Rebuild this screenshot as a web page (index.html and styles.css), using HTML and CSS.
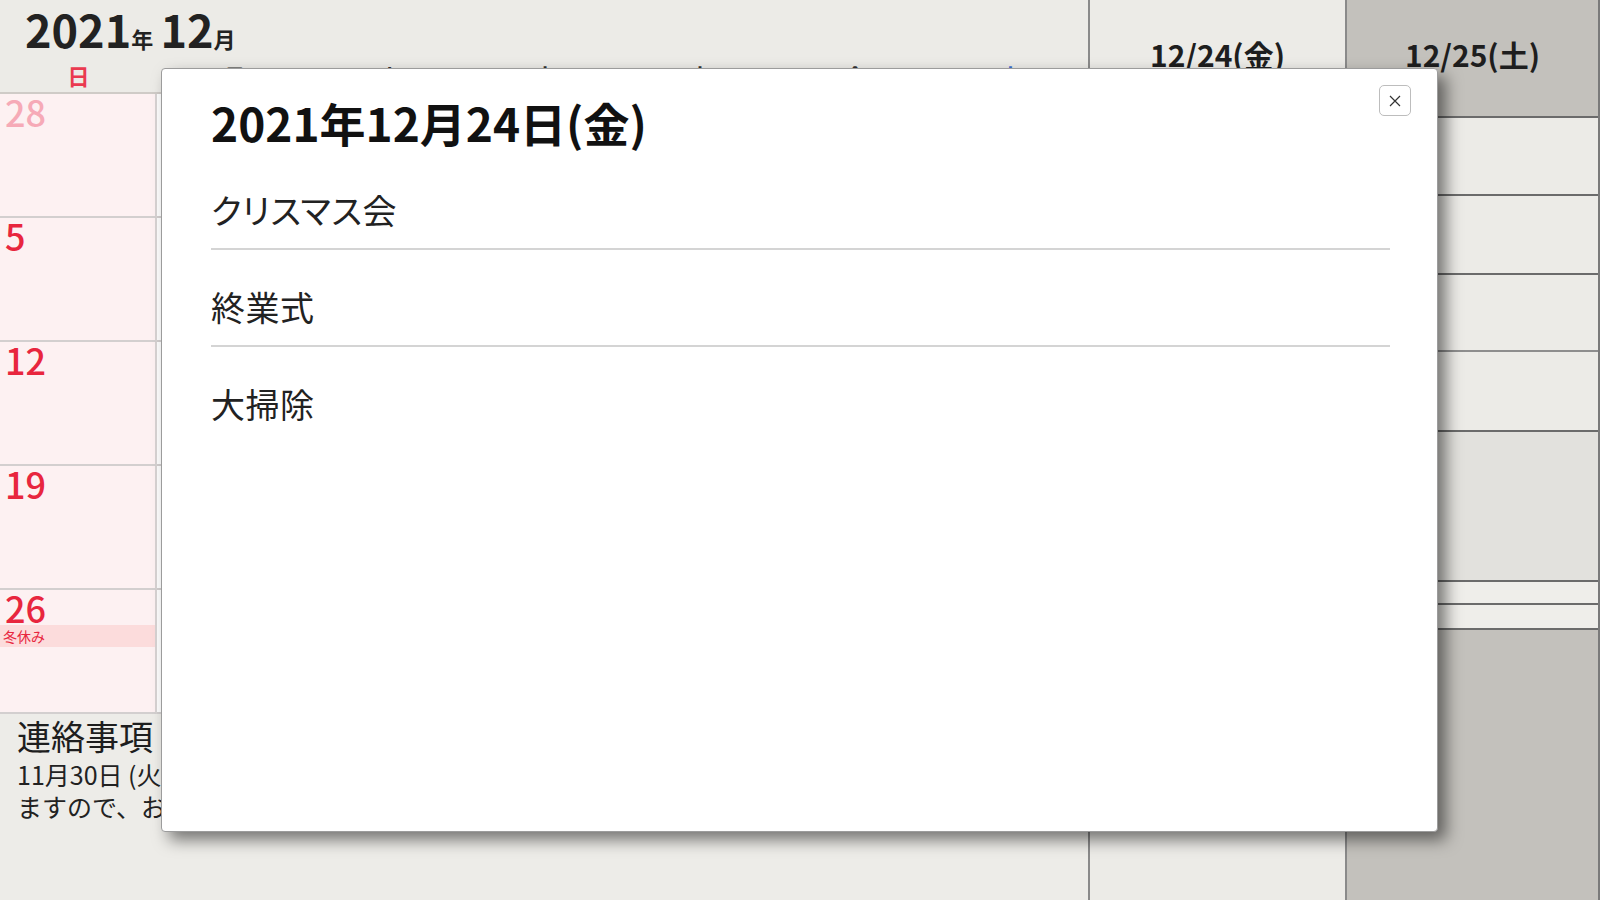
FILE: index.html
```html
<!DOCTYPE html>
<html lang="ja">
<head>
<meta charset="utf-8">
<title>2021年12月</title>
<link rel="stylesheet" href="styles.css">
</head>
<body>
<div class="app">
  <section class="month">
    <header class="month-head">
      <h1 class="month-title"><span class="big">2021</span><span class="small">年</span> <span class="big">12</span><span class="small">月</span></h1>
      <div class="weekdays">
        <span class="sun">日</span><span>月</span><span>火</span><span>水</span><span>木</span><span>金</span><span class="sat">土</span>
      </div>
    </header>
    <div class="month-grid">
      <div class="cell sun-cell"><span class="num prev">28</span></div>
      <div class="cell"><span class="num">29</span></div>
      <div class="cell"><span class="num">30</span></div>
      <div class="cell"><span class="num">1</span></div>
      <div class="cell"><span class="num">2</span></div>
      <div class="cell"><span class="num">3</span></div>
      <div class="cell"><span class="num">4</span></div>

      <div class="cell sun-cell"><span class="num">5</span></div>
      <div class="cell"><span class="num">6</span></div>
      <div class="cell"><span class="num">7</span></div>
      <div class="cell"><span class="num">8</span></div>
      <div class="cell"><span class="num">9</span></div>
      <div class="cell"><span class="num">10</span></div>
      <div class="cell"><span class="num">11</span></div>

      <div class="cell sun-cell"><span class="num">12</span></div>
      <div class="cell"><span class="num">13</span></div>
      <div class="cell"><span class="num">14</span></div>
      <div class="cell"><span class="num">15</span></div>
      <div class="cell"><span class="num">16</span></div>
      <div class="cell"><span class="num">17</span></div>
      <div class="cell"><span class="num">18</span></div>

      <div class="cell sun-cell"><span class="num">19</span></div>
      <div class="cell"><span class="num">20</span></div>
      <div class="cell"><span class="num">21</span></div>
      <div class="cell"><span class="num">22</span></div>
      <div class="cell"><span class="num">23</span></div>
      <div class="cell"><span class="num">24</span></div>
      <div class="cell"><span class="num">25</span></div>

      <div class="cell sun-cell"><span class="num">26</span><div class="event">冬休み</div></div>
      <div class="cell"><span class="num">27</span></div>
      <div class="cell"><span class="num">28</span></div>
      <div class="cell"><span class="num">29</span></div>
      <div class="cell"><span class="num">30</span></div>
      <div class="cell"><span class="num">31</span></div>
      <div class="cell"><span class="num prev">1</span></div>
    </div>
    <div class="notice">
      <h2 class="notice-title">連絡事項</h2>
      <p class="notice-text">11月30日 (火) は個人面談のため、午前中で下校となり<br>ますので、お迎えをよろしくお願いいたします。</p>
    </div>
  </section>

  <section class="day-col">
    <div class="day-head">12/24(金)</div>
    <div class="slot s1"></div>
    <div class="slot s2"></div>
    <div class="slot s3"></div>
    <div class="slot s4"></div>
    <div class="slot s5"></div>
    <div class="slot s6"></div>
    <div class="slot s7"></div>
  </section>

  <section class="day-col sat-col">
    <div class="day-head">12/25(土)</div>
    <div class="slot s1"></div>
    <div class="slot s2"></div>
    <div class="slot s3"></div>
    <div class="slot s4"></div>
    <div class="slot s5"></div>
    <div class="slot s6"></div>
    <div class="slot s7"></div>
  </section>
</div>

<div class="modal" role="dialog">
  <button class="close" aria-label="閉じる">
    <svg width="14" height="14" viewBox="0 0 14 14"><path d="M2 2L12 12M12 2L2 12" stroke="#333" stroke-width="1.2" fill="none"/></svg>
  </button>
  <h2 class="modal-title">2021年12月24日(金)</h2>
  <ul class="events">
    <li>クリスマス会</li>
    <li>終業式</li>
    <li>大掃除</li>
  </ul>
</div>
</body>
</html>
```

FILE: styles.css
```css
* { box-sizing: border-box; }

html, body {
  margin: 0;
  padding: 0;
}

body {
  width: 1600px;
  height: 900px;
  overflow: hidden;
  position: relative;
  font-family: "Noto Sans CJK JP", "Noto Sans", sans-serif;
  color: #222;
  background: #ecebe7;
}

.app {
  display: flex;
  height: 900px;
}

/* ---------- month ---------- */
.month {
  width: 1088px;
  display: flex;
  flex-direction: column;
  background: #ecebe7;
}

.month-head {
  height: 94px;
  border-bottom: 2px solid #cfcbc7;
  display: flex;
  flex-direction: column;
}

.month-title {
  margin: 0;
  height: 60px;
  padding: 0 0 0 25px;
  line-height: 58px;
  font-weight: 700;
  color: #222;
  white-space: pre;
}

.month-title .big { font-size: 45px; }
.month-title .small { font-size: 22px; }

.weekdays {
  height: 32px;
  display: grid;
  grid-template-columns: 157px repeat(6, 1fr);
}

.weekdays span {
  text-align: center;
  font-size: 22px;
  line-height: 30px;
  font-weight: 700;
  color: #333;
}

.weekdays .sun { color: #ea3a50; }
.weekdays .sat { color: #3d6fd0; }

.month-grid {
  display: grid;
  grid-template-columns: 157px repeat(6, 1fr);
  grid-auto-rows: 124px;
}

.cell {
  background: #ffffff;
  border-bottom: 2px solid #d3cfcf;
  border-right: 2px solid #d8d3d3;
}

.sun-cell {
  background: #fdf1f2;
}

.num {
  display: block;
  padding-left: 5px;
  font-size: 36px;
  line-height: 35px;
  font-weight: 500;
  color: #333;
}

.sun-cell .num { color: #e8263e; }
.sun-cell .num.prev { color: #f6aab7; }

.event {
  height: 22px;
  line-height: 22px;
  font-size: 14px;
  color: #e8263e;
  background: #fcdcdc;
  padding-left: 3px;
}

.notice {
  flex: 1;
  background: #edece8;
  padding: 0 0 0 17px;
}

.notice-title {
  margin: 0;
  font-size: 34px;
  line-height: 44px;
  font-weight: 400;
  color: #1e1e1e;
}

.notice-text {
  margin: 0;
  font-size: 25px;
  line-height: 32px;
  color: #222;
  white-space: nowrap;
}

/* ---------- day columns ---------- */
.day-col {
  width: 257px;
  border-left: 2px solid #8a8a8a;
  background: #ecebe7;
  display: flex;
  flex-direction: column;
}

.sat-col {
  width: 255px;
  background: #c3c1bc;
  border-right: 2px solid #7a7a7a;
}

.day-head {
  height: 116px;
  padding-top: 34px;
  text-align: center;
  font-size: 30px;
  line-height: 40px;
  font-weight: 700;
  color: #1e1e1e;
}

.slot {
  border-top: 2px solid #6b6b6b;
  background: #ecebe7;
}

.slot.s1 { height: 78px; }
.slot.s2 { height: 79px; }
.slot.s3 { height: 77px; }
.slot.s4 { height: 80px; border-top-color: #8e8e8e; }
.slot.s5 { height: 150px; background: #e2e1dd; }
.slot.s6 { height: 23px; background: #efeeea; }
.slot.s7 { height: 27px; background: #efeeea; border-bottom: 2px solid #6b6b6b; }

/* ---------- modal ---------- */
.modal {
  position: absolute;
  left: 161px;
  top: 68px;
  width: 1277px;
  height: 764px;
  background: #ffffff;
  border: 1px solid #9c9c9c;
  border-radius: 4px;
  box-shadow: 8px 8px 16px rgba(0, 0, 0, 0.5);
  padding: 25px 47px 0 49px;
}

.close {
  position: absolute;
  top: 16px;
  right: 26px;
  width: 32px;
  height: 31px;
  padding: 0;
  border: 1px solid #bdbdbd;
  border-radius: 5px;
  background: #fff;
  display: flex;
  align-items: center;
  justify-content: center;
}

.modal-title {
  margin: 0 0 3px;
  font-size: 46px;
  line-height: 56px;
  font-weight: 700;
  color: #111;
}

.events {
  list-style: none;
  margin: 0;
  padding: 0;
}

.events li {
  padding: 34px 0 15px;
  font-size: 34px;
  line-height: 46px;
  letter-spacing: 0.5px;
  font-feature-settings: "palt";
  color: #222;
  border-bottom: 2px solid #d4d4d4;
}

.events li:last-child { border-bottom: none; }
```
